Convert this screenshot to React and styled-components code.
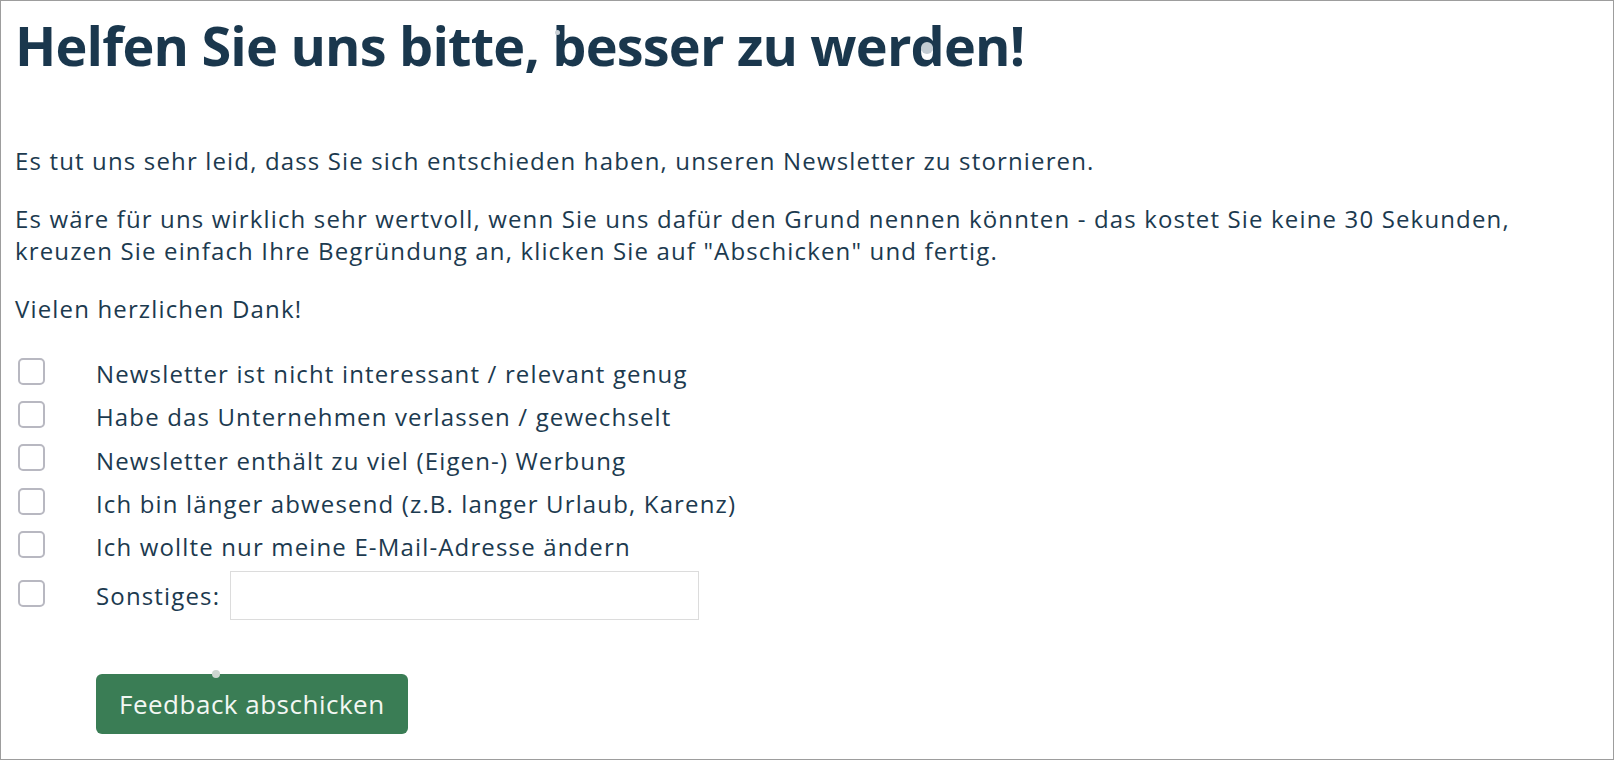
import React from 'react';
import styled, { createGlobalStyle } from 'styled-components';

const GlobalStyle = createGlobalStyle`
  html, body {
    margin: 0;
    padding: 0;
    background: #fff;
  }
  body {
    font-family: 'Open Sans', 'Noto Sans', sans-serif;
    color: #1c3a4f;
  }
`;

const reasons = [
  'Newsletter ist nicht interessant / relevant genug',
  'Habe das Unternehmen verlassen / gewechselt',
  'Newsletter enthält zu viel (Eigen-) Werbung',
  'Ich bin länger abwesend (z.B. langer Urlaub, Karenz)',
  'Ich wollte nur meine E-Mail-Adresse ändern',
];

// faint marks that sit on top of the page in the capture
const marks = [
  { x: 556, y: 31, size: 5, color: '#c9d0d6' },
  { x: 926, y: 47, size: 12, color: '#c3ccd3' },
  { x: 215, y: 673, size: 8, color: '#cdd6d0' },
];

export default function App() {
  return (
    <>
      <GlobalStyle />
      <Frame>
        <Title>Helfen Sie uns bitte, besser zu werden!</Title>

        <Intro>
          <Text>Es tut uns sehr leid, dass Sie sich entschieden haben, unseren Newsletter zu stornieren.</Text>
          <Text>
            Es wäre für uns wirklich sehr wertvoll, wenn Sie uns dafür den Grund nennen könnten - das kostet Sie keine 30 Sekunden,
            kreuzen Sie einfach Ihre Begründung an, klicken Sie auf "Abschicken" und fertig.
          </Text>
          <Text>Vielen herzlichen Dank!</Text>
        </Intro>

        <Form onSubmit={(e) => e.preventDefault()}>
          <Options>
            {reasons.map((reason) => (
              <Option key={reason}>
                <Box type="checkbox" />
                <span>{reason}</span>
              </Option>
            ))}
            <Option $other>
              <Box type="checkbox" />
              <OtherLabel>
                Sonstiges:
                <OtherInput type="text" />
              </OtherLabel>
            </Option>
          </Options>

          <Submit type="submit">Feedback abschicken</Submit>
        </Form>

        {marks.map((m, i) => (
          <Mark
            key={i}
            style={{
              left: m.x - m.size / 2,
              top: m.y - m.size / 2,
              width: m.size,
              height: m.size,
              background: m.color,
            }}
          />
        ))}
      </Frame>
    </>
  );
}

const Frame = styled.div`
  position: relative;
  width: 1614px;
  height: 760px;
  box-sizing: border-box;
  border: 1px solid #9d9d9d;
  padding: 0 14px;
  overflow: hidden;
`;

const Mark = styled.span`
  position: absolute;
  border-radius: 50%;
  pointer-events: none;
`;

const Title = styled.h1`
  margin: 10px 0 0;
  font-size: 54px;
  line-height: 68px;
  font-weight: 700;
  letter-spacing: -0.8px;
  color: #1a374d;
`;

const Intro = styled.div`
  margin-top: 66px;
`;

const Text = styled.p`
  margin: 0 0 26px;
  font-size: 24px;
  line-height: 32px;
  letter-spacing: 1.15px;
`;

const Form = styled.form`
  margin-top: 27px;
`;

const Options = styled.div`
  display: flex;
  flex-direction: column;
`;

const Option = styled.label`
  display: grid;
  grid-template-columns: 81px auto;
  align-items: center;
  height: ${(p) => (p.$other ? '52px' : '43.3px')};
  padding-top: ${(p) => (p.$other ? '3px' : '0')};
  box-sizing: border-box;
  font-size: 24px;
  letter-spacing: 1.15px;
  justify-items: start;
`;

const Box = styled.input`
  appearance: none;
  margin: 0 0 5px 3px;
  width: 27px;
  height: 27px;
  box-sizing: border-box;
  border: 2px solid #b8b8c1;
  border-radius: 5px;
  background: #fff;

  &:checked {
    background: #3a7d55;
    border-color: #3a7d55;
  }
`;

const OtherLabel = styled.span`
  display: flex;
  align-items: center;
  gap: 10px;
`;

const OtherInput = styled.input`
  width: 469px;
  height: 49px;
  box-sizing: border-box;
  border: 1.5px solid #dcdcdc;
  padding: 0 10px;
  font: inherit;
  color: inherit;
  outline: none;
`;

const Submit = styled.button`
  margin: 54px 0 0 81px;
  height: 60px;
  padding: 0 23px;
  border: none;
  border-radius: 6px;
  background: #3a7d55;
  color: #f2f7f3;
  font-family: 'Open Sans', 'Noto Sans', sans-serif;
  font-size: 26px;
  letter-spacing: 0.5px;
  cursor: pointer;
`;
